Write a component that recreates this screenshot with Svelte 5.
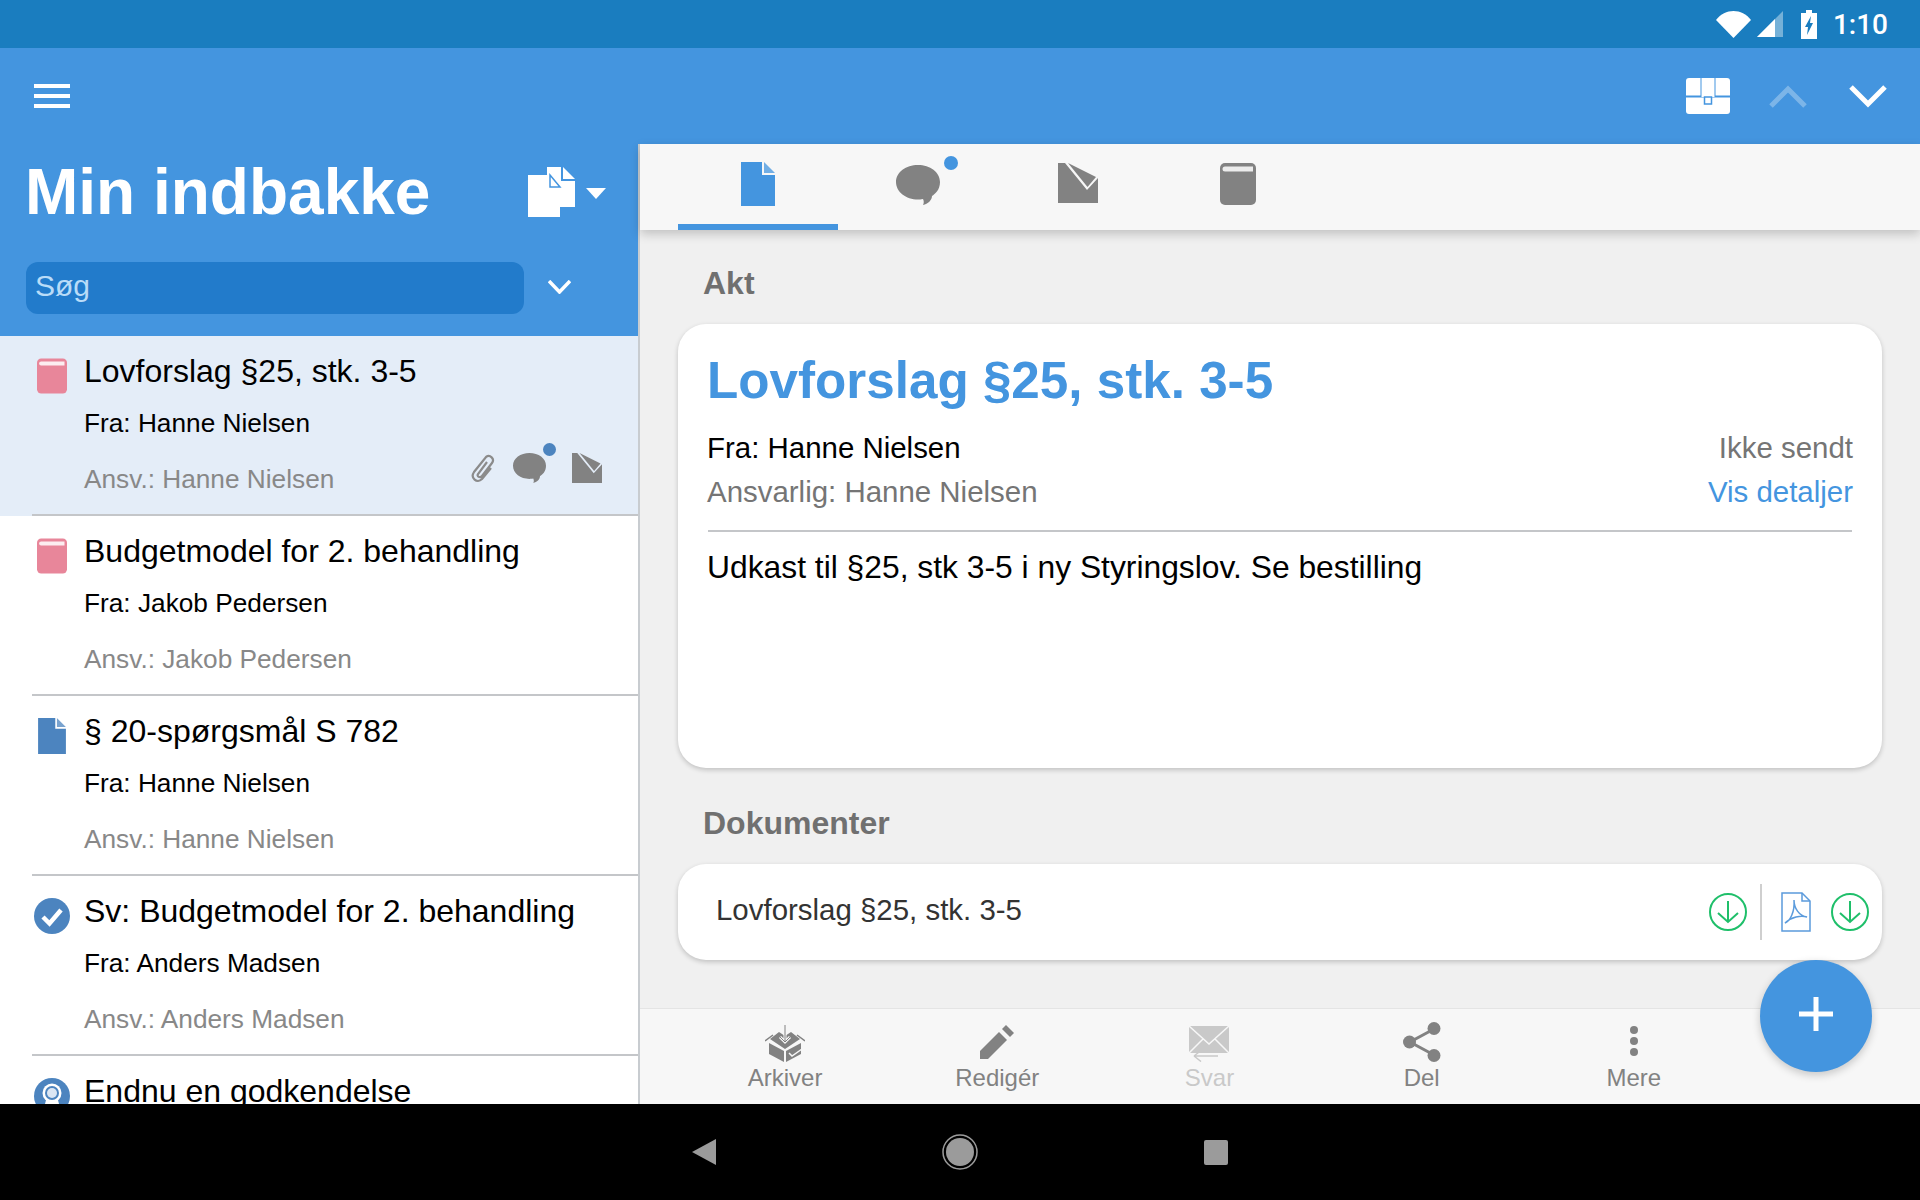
<script>
  const rows = [
    { title: 'Lovforslag §25, stk. 3-5', from: 'Hanne Nielsen', owner: 'Hanne Nielsen', icon: 'book', active: true },
    { title: 'Budgetmodel for 2. behandling', from: 'Jakob Pedersen', owner: 'Jakob Pedersen', icon: 'book' },
    { title: '§ 20-spørgsmål S 782', from: 'Hanne Nielsen', owner: 'Hanne Nielsen', icon: 'doc' },
    { title: 'Sv: Budgetmodel for 2. behandling', from: 'Anders Madsen', owner: 'Anders Madsen', icon: 'check' },
    { title: 'Endnu en godkendelse', from: 'Anders Madsen', owner: 'Anders Madsen', icon: 'badge' },
  ];
  const actions = ['Arkiver', 'Redigér', 'Svar', 'Del', 'Mere'];
</script>

{#snippet bookIcon(w, h, fill)}
  <svg width={w} height={h} viewBox="0 0 36 42">
    <path d="M5 0H31A5 5 0 0 1 36 5V37A5 5 0 0 1 31 42H5A5 5 0 0 1 0 37V5A5 5 0 0 1 5 0Z" fill={fill} />
    <path d="M5 3.500H33V8.500H5A2.500 2.500 0 0 1 5 3.500Z" fill="#fff" opacity="0.85" />
  </svg>
{/snippet}

{#snippet docIcon(w, h, fill)}
  <svg width={w} height={h} viewBox="0 0 34 44">
    <path d="M0 0H21V13H34V44H0Z" fill={fill} />
    <path d="M23 0L34 11H23Z" fill={fill} opacity="0.75" />
  </svg>
{/snippet}

{#snippet bubbleIcon(w, h)}
  <svg width={w} height={h} viewBox="0 0 44 40">
    <path d="M22 0C34 0 44 7 44 17C44 25 39 29 36 31C36 35 32 39 27 40C28 38 28 36 27 34C25 34.500 23 34.500 22 34.500C10 34.500 0 27 0 17C0 7 10 0 22 0Z" fill="#828282" />
  </svg>
{/snippet}

{#snippet foldIcon(w, h)}
  <svg width={w} height={h} viewBox="0 0 40 40">
    <path d="M0 0H7L29 27L40 15V40H0Z" fill="#828282" />
    <path d="M10 0L38 14L29.500 24Z" fill="#828282" />
  </svg>
{/snippet}

{#snippet downloadIcon()}
  <svg width="38" height="38" viewBox="0 0 38 38" fill="none" stroke="#1fbf6a" stroke-width="2">
    <circle cx="19" cy="19" r="18" />
    <path d="M19 8V29M9 20L19 29L29 20" />
  </svg>
{/snippet}

<div class="app">
  <div class="status">
    <svg width="35" height="27" viewBox="0 0 35 27"><path d="M0 9C9 -3 26 -3 35 9L17.500 27Z" fill="#fff" /></svg>
    <svg class="signal" width="26" height="26" viewBox="0 0 26 26">
      <path d="M0 26L26 0V26Z" fill="#fff" opacity="0.4" />
      <path d="M0 26L18 8V26Z" fill="#fff" />
    </svg>
    <svg class="battery" width="16" height="29" viewBox="0 0 16 29">
      <path d="M5 0H11V3H16V29H0V3H5Z" fill="#fff" />
      <path d="M10 6L4 17H7L6 25L12 13H9Z" fill="#1a7dbf" />
    </svg>
    <span class="time">1:10</span>
  </div>

  <div class="toolbar">
    <div class="burger"><i></i><i></i><i></i></div>
    <div class="toolbar-right">
      <svg width="44" height="36" viewBox="0 0 44 36">
        <path d="M3 0H14.500V17.500H0V3A3 3 0 0 1 3 0Z" fill="#fff" />
        <path d="M15.500 0H28.500V19H15.500Z" fill="#fff" />
        <path d="M29.500 0H41A3 3 0 0 1 44 3V17.500H29.500Z" fill="#fff" />
        <path d="M0 19.500H44V33A3 3 0 0 1 41 36H3A3 3 0 0 1 0 33Z" fill="#fff" />
        <path d="M18.500 19H25.500V26H18.500Z" fill="#fff" stroke="#4495df" stroke-width="1.500" />
      </svg>
      <svg class="up" width="38" height="23" viewBox="0 0 38 23" fill="none" stroke="#fff" stroke-width="5" opacity="0.3"><path d="M2 21L19 4L36 21" /></svg>
      <svg class="down" width="38" height="23" viewBox="0 0 38 23" fill="none" stroke="#fff" stroke-width="5"><path d="M2 2L19 19L36 2" /></svg>
    </div>
  </div>

  <div class="main">
    <aside class="side">
      <header class="side-head">
        <div class="title-row">
          <h1>Min indbakke</h1>
          <svg width="48" height="50" viewBox="0 0 48 50">
            <path d="M19 0H33V14H47V40H19Z" fill="#fff" />
            <path d="M35 0L47 12H35Z" fill="#fff" />
            <path d="M0 8H20V23H32V50H0Z" fill="#fff" />
            <path d="M22 8L32 20H22Z" fill="#fff" stroke="#4495df" stroke-width="1.500" />
          </svg>
          <span class="caret"></span>
        </div>
        <div class="search-row">
          <div class="search">Søg</div>
          <svg width="23" height="14" viewBox="0 0 23 14" fill="none" stroke="#fff" stroke-width="3.500"><path d="M1 1L11.500 12L22 1" /></svg>
        </div>
      </header>

      <ul class="list">
        {#each rows as row}
          <li class="row" class:active={row.active}>
            <div class="row-inner">
              <div class="row-icon">
                {#if row.icon === 'book'}
                  {@render bookIcon(30, 36, '#e8869a')}
                {:else if row.icon === 'doc'}
                  {@render docIcon(28, 36, '#4c84bf')}
                {:else if row.icon === 'check'}
                  <svg width="36" height="36" viewBox="0 0 36 36">
                    <circle cx="18" cy="18" r="18" fill="#4c84bf" />
                    <path d="M9 19L15.500 25.500L27 12" fill="none" stroke="#fff" stroke-width="4.500" />
                  </svg>
                {:else}
                  <svg width="36" height="36" viewBox="0 0 36 36">
                    <circle cx="18" cy="18" r="18" fill="#4c84bf" />
                    <path d="M12 22L9 34H27L24 22Z" fill="#fff" />
                    <circle cx="18" cy="15" r="9.500" fill="#fff" />
                    <circle cx="18" cy="15" r="7" fill="#4c84bf" />
                    <circle cx="18" cy="15" r="5" fill="#dbe6f3" />
                  </svg>
                {/if}
              </div>
              <div class="row-text">
                <div class="row-title">{row.title}</div>
                <div class="row-from">Fra: {row.from}</div>
                <div class="row-owner">Ansv.: {row.owner}</div>
              </div>
              {#if row.active}
                <div class="row-flags">
                  <svg class="clip" width="26" height="28" viewBox="0 0 26 28" fill="none" stroke="#8b8b8b" stroke-width="2.200">
                    <path d="M17 8L8 20C6.500 22.500 10 24.500 12 22L22 9C25 5 20 0 16 3L4 18C0 24 7 30 12 25L21 14" />
                  </svg>
                  <span class="flag-bubble">
                    {@render bubbleIcon(33, 30)}
                    <i class="dot small"></i>
                  </span>
                  {@render foldIcon(30, 30)}
                </div>
              {/if}
            </div>
          </li>
        {/each}
      </ul>
    </aside>

    <section class="detail">
      <nav class="tabs">
        <div class="tab on">{@render docIcon(34, 44, '#4495df')}</div>
        <div class="tab">
          <span class="tab-bubble">{@render bubbleIcon(44, 40)}<i class="dot"></i></span>
        </div>
        <div class="tab">{@render foldIcon(40, 40)}</div>
        <div class="tab">{@render bookIcon(36, 42, '#828282')}</div>
      </nav>

      <div class="content">
        <h2>Akt</h2>
        <div class="card">
          <h3>Lovforslag §25, stk. 3-5</h3>
          <div class="meta"><span>Fra: Hanne Nielsen</span><span class="grey">Ikke sendt</span></div>
          <div class="meta"><span class="grey">Ansvarlig: Hanne Nielsen</span><span class="link">Vis detaljer</span></div>
          <hr />
          <p>Udkast til §25, stk 3-5 i ny Styringslov. Se bestilling</p>
        </div>

        <h2 class="second">Dokumenter</h2>
        <div class="doc-card">
          <span class="doc-name">Lovforslag §25, stk. 3-5</span>
          {@render downloadIcon()}
          <span class="doc-sep"></span>
          <svg width="30" height="40" viewBox="0 0 30 40" fill="none" stroke="#5b9bdc" stroke-width="1.500">
            <path d="M1 1H21L29 9V39H1Z" />
            <path d="M21 1V9H29" />
            <path d="M4 31C9 29 14 20 13 8C13 16 18 24 26 25C20 23 10 25 4 31Z" />
          </svg>
          {@render downloadIcon()}
        </div>
      </div>

      <div class="actions">
        {#each actions as label}
          <div class="action" class:off={label === 'Svar'}>
            {#if label === 'Arkiver'}
              <svg class="mb2" width="40" height="37" viewBox="0 0 40 37">
                <path d="M4 18L19 26V37L4 29Z" fill="#828282" />
                <path d="M21 26L36 18V29L21 37Z" fill="#828282" />
                <path d="M5 14L14 7L20 11L26 7L35 14L20 24Z" fill="#828282" />
                <path d="M0 16L8 10M40 16L32 10" stroke="#828282" stroke-width="1.500" />
                <path d="M20 6V17M15 12L20 17L25 12" fill="none" stroke="#f7f7f7" stroke-width="3" />
                <path d="M20 0V17M14 11L20 17L26 11" fill="none" stroke="#828282" stroke-width="1" />
                <path d="M24 28L27 31L37 24" fill="none" stroke="#f7f7f7" stroke-width="1.500" />
              </svg>
            {:else if label === 'Redigér'}
              <svg class="mb5" width="34" height="34" viewBox="0 0 34 34">
                <path d="M0 34V26L19 7L27 15L8 34Z" fill="#828282" />
                <path d="M22 4L26 0L34 8L30 12Z" fill="#828282" />
              </svg>
            {:else if label === 'Svar'}
              <svg class="mb2" width="40" height="36" viewBox="0 0 40 36">
                <path d="M0 0H40V27H0Z" fill="#c9c9c9" />
                <path d="M0 0L20 18L40 0M0 27L14 13M40 27L26 13" fill="none" stroke="#f7f7f7" stroke-width="1.500" />
                <path d="M4 30H29" stroke="#f7f7f7" stroke-width="5" />
                <path d="M5 30H29M5 30L12 24.500M5 30L12 35.500" fill="none" stroke="#c9c9c9" stroke-width="1.500" />
              </svg>
            {:else if label === 'Del'}
              <svg class="mb2" width="38" height="40" viewBox="0 0 38 40">
                <path d="M31 7L7 20L31 33" fill="none" stroke="#828282" stroke-width="3" />
                <circle cx="31" cy="6.500" r="6.500" fill="#828282" />
                <circle cx="6.500" cy="20" r="6.500" fill="#828282" />
                <circle cx="31" cy="33.500" r="6.500" fill="#828282" />
              </svg>
            {:else}
              <svg class="mb8" width="12" height="30" viewBox="0 0 12 30">
                <circle cx="6" cy="4" r="4" fill="#828282" />
                <circle cx="6" cy="15" r="4" fill="#828282" />
                <circle cx="6" cy="26" r="4" fill="#828282" />
              </svg>
            {/if}
            <span>{label}</span>
          </div>
        {/each}
      </div>

      <button class="fab" aria-label="Ny">
        <svg width="34" height="34" viewBox="0 0 34 34"><path d="M14.500 0H19.500V14.500H34V19.500H19.500V34H14.500V19.500H0V14.500H14.500Z" fill="#fff" /></svg>
      </button>
    </section>
  </div>

  <div class="navbar">
    <svg width="24" height="26" viewBox="0 0 24 26"><path d="M24 0V26L0 13Z" fill="#9b9b9b" /></svg>
    <svg width="36" height="36" viewBox="0 0 36 36">
      <circle cx="18" cy="18" r="17" fill="none" stroke="#9b9b9b" stroke-width="1.500" />
      <circle cx="18" cy="18" r="14" fill="#9b9b9b" />
    </svg>
    <span class="square"></span>
  </div>
</div>

<style>
  :global(body) {
    margin: 0;
    font-family: "Liberation Sans", Arial, sans-serif;
  }

  .app {
    width: 1920px;
    height: 1200px;
    display: flex;
    flex-direction: column;
    overflow: hidden;
    background: #f0f0f0;
  }

  .status {
    height: 48px;
    background: #1a7dbf;
    display: flex;
    align-items: center;
    justify-content: flex-end;
    padding-right: 32px;
    flex-shrink: 0;
  }

  .signal {
    margin-left: 6px;
  }

  .battery {
    margin-left: 18px;
  }

  .time {
    margin-left: 16px;
    color: #fff;
    font-family: Roboto, sans-serif;
    font-size: 28px;
    font-weight: 500;
  }

  .toolbar {
    height: 96px;
    background: #4495df;
    display: flex;
    align-items: center;
    justify-content: space-between;
    padding: 0 33px 0 34px;
    flex-shrink: 0;
  }

  .burger {
    display: flex;
    flex-direction: column;
    gap: 6px;
  }

  .burger i {
    display: block;
    width: 36px;
    height: 4px;
    background: #fff;
  }

  .toolbar-right {
    display: flex;
    align-items: center;
  }

  .up {
    margin-left: 39px;
  }

  .down {
    margin-left: 42px;
  }

  .main {
    flex: 1;
    min-height: 0;
    display: flex;
  }

  .side {
    width: 640px;
    flex-shrink: 0;
    box-sizing: border-box;
    border-right: 2px solid #c8ccd0;
    background: #fff;
    display: flex;
    flex-direction: column;
    overflow: hidden;
  }

  .side-head {
    height: 192px;
    flex-shrink: 0;
    background: #4495df;
    box-sizing: border-box;
    padding: 23px 0 0 26px;
  }

  .title-row {
    display: flex;
    align-items: center;
    height: 50px;
  }

  h1 {
    margin: 0 0 0 -1px;
    width: 503px;
    color: #fff;
    font-size: 64px;
    font-weight: 700;
    line-height: 50px;
  }

  .caret {
    margin: 2px 0 0 10px;
    width: 0;
    height: 0;
    border-left: 10px solid transparent;
    border-right: 10px solid transparent;
    border-top: 11px solid #fff;
  }

  .search-row {
    display: flex;
    align-items: center;
    margin-top: 45px;
  }

  .search {
    width: 498px;
    height: 52px;
    box-sizing: border-box;
    padding-left: 9px;
    border-radius: 12px;
    background: #227bcb;
    color: #b9dcf8;
    font-size: 30px;
    line-height: 48px;
  }

  .search-row svg {
    margin: 0 0 2px 24px;
  }

  .list {
    list-style: none;
    margin: 0;
    padding: 0;
  }

  .row {
    height: 180px;
    padding-left: 32px;
  }

  .row.active {
    background: #e4edf8;
  }

  .row-inner {
    height: 100%;
    box-sizing: border-box;
    border-bottom: 2px solid #c4c6c9;
    display: flex;
    position: relative;
  }

  .row-icon {
    width: 52px;
    height: 60px;
    flex-shrink: 0;
    box-sizing: border-box;
    padding: 22px 12px 0 0;
    display: flex;
    justify-content: center;
  }

  .row-text {
    padding-top: 11px;
  }

  .row-title {
    color: #000;
    font-size: 32px;
    line-height: 48px;
  }

  .row-from {
    margin-top: 4px;
    color: #000;
    font-size: 26.24px;
    line-height: 48px;
  }

  .row-owner {
    margin-top: 8px;
    color: #888;
    font-size: 26.24px;
    line-height: 48px;
  }

  .row-flags {
    position: absolute;
    right: 36px;
    top: 117px;
    display: flex;
    align-items: center;
  }

  .flag-bubble {
    position: relative;
    display: flex;
    margin: 0 26px 0 17px;
  }

  .dot {
    position: absolute;
    left: 48px;
    top: -9px;
    width: 14px;
    height: 14px;
    border-radius: 50%;
    background: #4495df;
  }

  .dot.small {
    left: 30px;
    top: -10px;
    width: 13px;
    height: 13px;
    background: #4c84bf;
  }

  .detail {
    flex: 1;
    min-width: 0;
    display: flex;
    flex-direction: column;
    position: relative;
  }

  .tabs {
    height: 86px;
    flex-shrink: 0;
    box-sizing: border-box;
    padding-left: 38px;
    background: #f7f7f7;
    display: flex;
    box-shadow: 0 4px 10px rgba(0, 0, 0, 0.2);
    position: relative;
  }

  .tab {
    width: 160px;
    height: 86px;
    box-sizing: border-box;
    display: flex;
    justify-content: center;
    padding-top: 19px;
  }

  .tab.on {
    border-bottom: 6px solid #4495df;
    padding-top: 18px;
  }

  .tab-bubble {
    position: relative;
    display: flex;
    height: 40px;
    margin-top: 2px;
  }

  .content {
    flex: 1;
    min-height: 0;
    padding: 33px 38px 0;
  }

  h2 {
    margin: 0 0 21px;
    padding-left: 25px;
    color: #707070;
    font-size: 32px;
    font-weight: 700;
    line-height: 40px;
  }

  h2.second {
    margin-top: 35px;
  }

  .card {
    height: 444px;
    box-sizing: border-box;
    padding: 27px 29px 0;
    background: #fff;
    border-radius: 28px;
    box-shadow: 0 2px 5px rgba(0, 0, 0, 0.2);
  }

  h3 {
    margin: 0 0 15px;
    color: #4495df;
    font-size: 51.2px;
    font-weight: 700;
    line-height: 60px;
  }

  .meta {
    display: flex;
    justify-content: space-between;
    color: #000;
    font-size: 29.44px;
    line-height: 44px;
  }

  .grey {
    color: #757575;
  }

  .link {
    color: #4495df;
  }

  hr {
    margin: 16px 1px 0;
    border: none;
    height: 2px;
    background: #c4c6c9;
  }

  p {
    margin: 13px 0 0;
    color: #000;
    font-size: 31.8px;
    line-height: 44px;
  }

  .doc-card {
    height: 96px;
    box-sizing: border-box;
    padding: 0 13px 0 38px;
    background: #fff;
    border-radius: 28px;
    box-shadow: 0 2px 5px rgba(0, 0, 0, 0.2);
    display: flex;
    align-items: center;
  }

  .doc-name {
    flex: 1;
    margin-bottom: 5px;
    color: #333;
    font-size: 29.44px;
  }

  .doc-sep {
    width: 2px;
    height: 56px;
    margin: 0 19px 0 13px;
    background: #cfcfcf;
  }

  .doc-card svg:last-child {
    margin-left: 20px;
  }

  .actions {
    height: 96px;
    flex-shrink: 0;
    box-sizing: border-box;
    padding-left: 39px;
    background: #f7f7f7;
    border-top: 1px solid #e4e4e4;
    display: flex;
  }

  .action {
    width: 212.2px;
    display: flex;
    flex-direction: column;
    align-items: center;
    justify-content: flex-end;
    padding-bottom: 12px;
    color: #828282;
    font-size: 24px;
    line-height: 28px;
  }

  .action.off {
    color: #c9c9c9;
  }

  .mb2 {
    margin-bottom: 2px;
  }

  .mb5 {
    margin-bottom: 5px;
  }

  .mb8 {
    margin-bottom: 8px;
  }

  .fab {
    position: absolute;
    left: 1120px;
    top: 816px;
    width: 112px;
    height: 112px;
    padding: 0 0 4px;
    border: none;
    border-radius: 50%;
    background: #4495df;
    box-shadow: 0 3px 8px rgba(0, 0, 0, 0.2);
    display: flex;
    align-items: center;
    justify-content: center;
  }

  .navbar {
    height: 96px;
    flex-shrink: 0;
    background: #000;
    display: flex;
    align-items: center;
    justify-content: center;
    gap: 226px;
  }

  .square {
    width: 24px;
    height: 25px;
    border-radius: 2px;
    background: #9b9b9b;
  }
</style>
